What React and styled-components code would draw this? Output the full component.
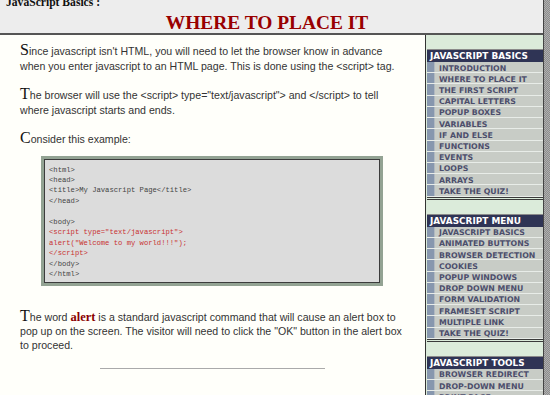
import React from 'react';
import styled, { createGlobalStyle } from 'styled-components';

const GlobalStyle = createGlobalStyle`
  html, body {
    margin: 0;
    padding: 0;
  }
  body {
    background-color: #9a9a9a;
    background-image: repeating-conic-gradient(#8c8c8c 0 25%, #b0b0b0 0 50%);
    background-size: 2px 2px;
    font-family: "Liberation Sans", Arial, sans-serif;
  }
`;

const Page = styled.div`
  width: 543px;
  border-right: 1px solid #444;
  background: #fffffa;
`;

const Header = styled.header`
  height: 33px;
  background: #ededed;
  border-bottom: 2px solid #555;
  overflow: hidden;
  font-family: "Liberation Serif", "Times New Roman", serif;
  font-weight: bold;
`;

const Crumb = styled.div`
  margin: -3px 0 0 6px;
  font-size: 11.6px;
  line-height: 12px;
  color: #111;
`;

const Title = styled.h1`
  margin: 3px 0 0;
  padding-right: 9px;
  text-align: center;
  font-size: 19.4px;
  line-height: 22px;
  color: #990000;
`;

const Columns = styled.div`
  display: flex;
  align-items: stretch;
`;

const Main = styled.main`
  width: 425px;
  flex: none;
  box-sizing: border-box;
  padding: 8px 15px 0 20px;
  color: #333;
  font-size: 10.6px;
  line-height: 14.5px;
`;

const Para = styled.p`
  margin: 0 0 14px;
  line-height: ${(p) => p.$lineHeight || '14.5px'};
`;

const Initial = styled.span`
  font-family: "Liberation Serif", "Times New Roman", serif;
  font-size: 16px;
  color: #111;
`;

const Keyword = styled.b`
  font-family: "Liberation Serif", "Times New Roman", serif;
  font-size: 12.5px;
  color: #8b0000;
`;

const CodeBox = styled.pre`
  width: 342px;
  box-sizing: border-box;
  margin: -5px 0 23px 21px;
  padding: 6px 5px 4px 5px;
  background: #dcdcdc;
  border: 3px solid #93a393;
  box-shadow: inset 0 0 0 1px #3c3c3c;
  font-family: "Liberation Mono", "Courier New", monospace;
  font-size: 7.2px;
  line-height: 10.45px;
  color: #444;
`;

const Red = styled.span`
  color: #c83232;
`;

const Rule = styled.hr`
  width: 225px;
  margin: 16px auto 0 80px;
  border: 0;
  border-top: 1px solid #aaa;
`;

const Sidebar = styled.aside`
  flex: 1;
  border-left: 1px solid #333;
  background: #dbebda;
  padding: 1px 0 20px 1px;
  font-family: "DejaVu Sans", Verdana, sans-serif;
  font-weight: bold;
`;

const MenuBlock = styled.section`
  margin-top: 13px;
  border-bottom: 3px double #3a3a3a;

  & + & {
    margin-top: 14px;
  }
`;

const MenuTitle = styled.div`
  height: 13px;
  line-height: 13px;
  box-sizing: border-box;
  border-top: 1px solid #8a8a8a;
  background: #2f3455;
  color: #fff;
  font-size: 8.9px;
  padding-left: 3px;
  white-space: nowrap;
`;

const MenuItem = styled.div`
  display: flex;
  height: 11.22px;
  box-sizing: border-box;
  border-bottom: 1px solid #e8ece8;
  background: #c8ccc6;
  color: #4c4e6c;
  font-size: 7.8px;
  line-height: 10.2px;
  white-space: nowrap;

  & > span {
    padding-top: 1.5px;
  }

  &::before {
    content: '';
    width: 7px;
    margin-right: 4px;
    background: #8797ae;
    border-right: 1px solid #b0b8c0;
  }
`;

const menus = [
  {
    title: 'JAVASCRIPT BASICS',
    items: [
      'INTRODUCTION',
      'WHERE TO PLACE IT',
      'THE FIRST SCRIPT',
      'CAPITAL LETTERS',
      'POPUP BOXES',
      'VARIABLES',
      'IF AND ELSE',
      'FUNCTIONS',
      'EVENTS',
      'LOOPS',
      'ARRAYS',
      'TAKE THE QUIZ!',
    ],
  },
  {
    title: 'JAVASCRIPT MENU',
    items: [
      'JAVASCRIPT BASICS',
      'ANIMATED BUTTONS',
      'BROWSER DETECTION',
      'COOKIES',
      'POPUP WINDOWS',
      'DROP DOWN MENU',
      'FORM VALIDATION',
      'FRAMESET SCRIPT',
      'MULTIPLE LINK',
      'TAKE THE QUIZ!',
    ],
  },
  {
    title: 'JAVASCRIPT TOOLS',
    items: ['BROWSER REDIRECT', 'DROP-DOWN MENU', 'PRINT PAGE'],
  },
];

const App = () => {
  return (
    <>
      <GlobalStyle />
      <Page>
        <Header>
          <Crumb>JavaScript Basics :</Crumb>
          <Title>WHERE TO PLACE IT</Title>
        </Header>
        <Columns>
          <Main>
            <Para>
              <Initial>S</Initial>ince javascript isn't HTML, you will need to let the
              browser know in advance when you enter javascript to an HTML page. This is
              done using the &lt;script&gt; tag.
            </Para>
            <Para>
              <Initial>T</Initial>he browser will use the &lt;script&gt;
              type="text/javascript"&gt; and &lt;/script&gt; to tell where javascript
              starts and ends.
            </Para>
            <Para>
              <Initial>C</Initial>onsider this example:
            </Para>
            <CodeBox>
              {'<html>\n<head>\n<title>My Javascript Page</title>\n</head>\n\n<body>\n'}
              <Red>
                {'<script type="text/javascript">\nalert("Welcome to my world!!!");\n</script>'}
              </Red>
              {'\n</body>\n</html>'}
            </CodeBox>
            <Para $lineHeight="13.6px">
              <Initial>T</Initial>he word <Keyword>alert</Keyword> is a standard javascript
              command that will cause an alert box to pop up on the screen. The visitor will
              need to click the "OK" button in the alert box to proceed.
            </Para>
            <Rule />
          </Main>
          <Sidebar>
            {menus.map((menu) => (
              <MenuBlock key={menu.title}>
                <MenuTitle>{menu.title}</MenuTitle>
                {menu.items.map((item) => (
                  <MenuItem key={item}>
                    <span>{item}</span>
                  </MenuItem>
                ))}
              </MenuBlock>
            ))}
          </Sidebar>
        </Columns>
      </Page>
    </>
  );
};

export default App;
